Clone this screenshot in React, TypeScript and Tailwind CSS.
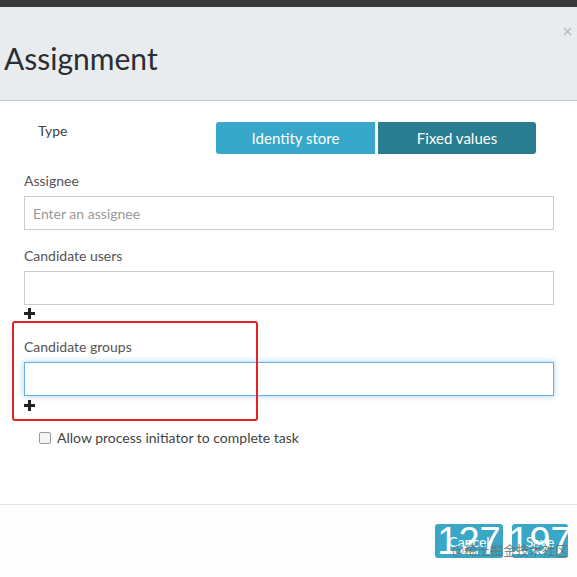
import React from "react";

const lato = { fontFamily: "Lato, 'Open Sans', Arial, sans-serif" };

function Plus() {
  return (
    <svg width="11" height="11" viewBox="0 0 11 11" className="block">
      <rect x="4" y="0" width="3" height="11" fill="#222" />
      <rect x="0" y="4" width="11" height="3" fill="#222" />
    </svg>
  );
}

export default function App() {
  return (
    <div className="w-[577px] h-[577px] overflow-hidden bg-white relative" style={lato}>
      <div className="h-[7px] bg-[#3a3a3a]" />
      <div className="relative h-[94px] bg-[#e9ecef] border-b border-[#c4c4c4] pt-[33px] pl-[4px]">
        <h1 className="text-[30px] leading-[36px] text-[#2b2f33] font-normal">Assignment</h1>
        <svg className="absolute left-[563px] top-[20px]" width="9" height="9" viewBox="0 0 9 9">
          <path d="M1 1L8 8M8 1L1 8" stroke="#b5b5b5" strokeWidth="1.3" />
        </svg>
      </div>
      <div className="relative h-[403px] pl-[24px] pr-[23px] pt-[21px]">
        <div className="flex items-start">
          <div className="w-[192px] pl-[14px] text-[14px] leading-[18px] text-[#444]">Type</div>
          <div className="flex gap-[3px]">
            <div className="w-[159px] h-[32px] rounded-l-[3px] bg-[#37a8c9] text-white text-[15px] flex items-center justify-center">Identity store</div>
            <div className="w-[158px] h-[32px] rounded-r-[3px] bg-[#2a7d91] text-white text-[15px] flex items-center justify-center">Fixed values</div>
          </div>
        </div>
        <div className="mt-[17px] text-[14px] leading-[20px] text-[#555]">Assignee</div>
        <div className="mt-[5px] h-[34px] border border-[#cccccc] flex items-center pl-[8px] text-[14px] text-[#999]">Enter an assignee</div>
        <div className="mt-[16px] text-[14px] leading-[20px] text-[#555]">Candidate users</div>
        <div className="mt-[5px] h-[34px] border border-[#cccccc]" />
        <div className="pt-[3px] h-[14px]"><Plus /></div>
        <div className="mt-[18px] text-[14px] leading-[20px] text-[#555]">Candidate groups</div>
        <div className="mt-[5px] h-[34px] border border-[#66afe9] shadow-[0_0_6px_rgba(102,175,233,0.6)]" />
        <div className="pt-[4px] h-[15px]"><Plus /></div>
        <div className="mt-[18px] pl-[15px] flex items-center gap-[6px]">
          <div className="w-[12px] h-[12px] border border-[#999] rounded-[2px] bg-[#f4f4f4]" />
          <span className="text-[14px] leading-[18px] text-[#444]">Allow process initiator to complete task</span>
        </div>
        <div className="absolute left-[12px] top-[220px] w-[246px] h-[100px] border-2 border-[#e52222] rounded-[3px]" />
      </div>
      <div className="h-[73px] border-t border-[#e2e2e2] bg-[#fdfdfd] flex justify-end items-start pt-[19px] pr-[9px] gap-[9px]">
        <div className="relative w-[68px] h-[34px] rounded-[3px] bg-[#3aa7c7] text-white text-[14px] flex items-center justify-center">
          Cancel
          <span className="absolute inset-0 flex items-center justify-center text-[38px] leading-none text-white" style={{ fontFamily: "'Liberation Sans', Arial, sans-serif" }}>127</span>
        </div>
        <div className="relative w-[56px] h-[34px] rounded-[3px] bg-[#3aa7c7] text-white text-[14px] flex items-center justify-center">
          Save
          <span className="absolute inset-0 flex items-center justify-center text-[38px] leading-none text-white" style={{ fontFamily: "'Liberation Sans', Arial, sans-serif" }}>197</span>
        </div>
        <span className="absolute left-[452px] top-[543px] text-[13px] leading-[14px] text-[rgba(110,110,110,0.85)]" style={{ fontFamily: "'Noto Sans CJK SC', sans-serif" }}>@稀土掘金技术社区</span>
      </div>
    </div>
  );
}
